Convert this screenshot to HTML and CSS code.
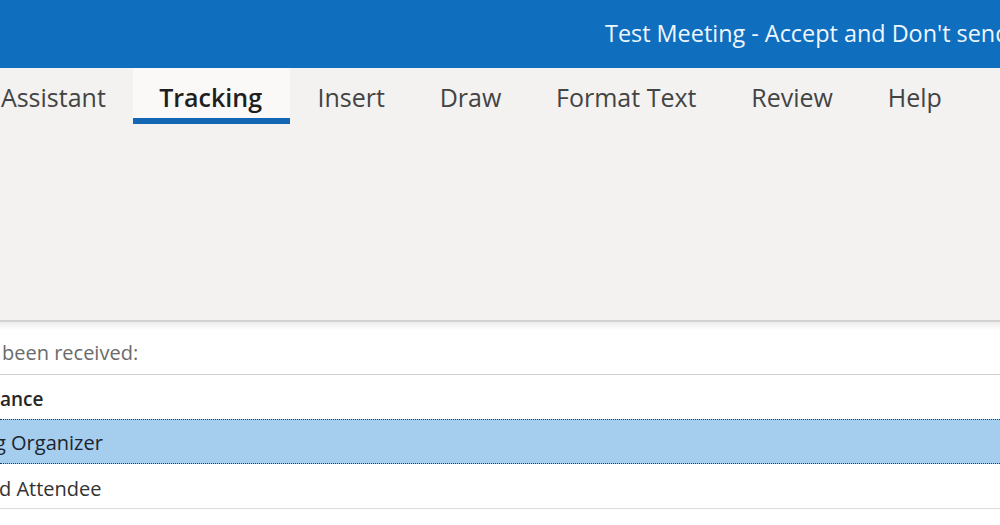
FILE: index.html
```html
<!DOCTYPE html>
<html>
<head>
<meta charset="utf-8">
<link rel="stylesheet" href="styles.css">
</head>
<body>
<div class="window">
  <header class="titlebar">
    <span class="title">Test Meeting - Accept and Don't send</span>
  </header>
  <section class="ribbon">
    <nav class="tabs">
      <span class="tab">Assistant</span>
      <span class="tab active">Tracking</span>
      <span class="tab">Insert</span>
      <span class="tab">Draw</span>
      <span class="tab">Format Text</span>
      <span class="tab">Review</span>
      <span class="tab">Help</span>
    </nav>
  </section>
  <main class="content">
    <div class="info">been received:</div>
    <div class="row header">ance</div>
    <div class="row selected"><span class="cut-g">g Organizer</span></div>
    <div class="row plain"><span class="cut-d">d Attendee</span></div>
  </main>
</div>
</body>
</html>
```
FILE: styles.css
```css
html, body {
  margin: 0;
  padding: 0;
  background: #ffffff;
}
body {
  width: 1000px;
  height: 525px;
  overflow: hidden;
  font-family: "Open Sans", "Noto Sans", sans-serif;
}
.window {
  display: flex;
  flex-direction: column;
  width: 1000px;
}
.titlebar {
  height: 68px;
  background: #106ebe;
  display: flex;
  align-items: center;
  padding-left: 605px;
  white-space: nowrap;
  overflow: hidden;
}
.title {
  color: #eef7ff;
  font-size: 23.4px;
  line-height: 1;
  padding-bottom: 1px;
}
.ribbon {
  height: 252px;
  background: #f3f2f1;
  border-bottom: 2px solid #d4d2d0;
  box-sizing: content-box;
}
.tabs {
  display: flex;
  height: 56px;
  margin-left: -26.5px;
}
.tab {
  display: flex;
  align-items: center;
  padding: 0 27.4px;
  font-size: 25px;
  color: #444444;
  white-space: nowrap;
  box-sizing: border-box;
  border-bottom: 6px solid transparent;
  padding-top: 8px;
}
.tab.active {
  background: #faf9f8;
  color: #201f1e;
  font-weight: 600;
  border-bottom-color: #1366b4;
  padding-left: 26px;
  padding-right: 28px;
}
.content {
  display: flex;
  flex-direction: column;
  background: linear-gradient(#ececec, #ffffff 8px);
}
.info {
  height: 53px;
  box-sizing: border-box;
  border-bottom: 1px solid #cfcfcf;
  font-size: 20px;
  color: #6b6b6b;
  padding-left: 2px;
  padding-top: 18px;
  line-height: 26px;
}
.row {
  height: 45px;
  box-sizing: border-box;
  display: flex;
  align-items: center;
  font-size: 20px;
  white-space: nowrap;
  overflow: hidden;
}
.row.header {
  font-weight: 600;
  font-size: 19px;
  color: #262626;
  height: 44px;
  padding-top: 4px;
}
.row.selected {
  background: #a4cdee;
  color: #1c2430;
  border-top: 1px dotted #2e3a44;
  border-bottom: 1px dotted #2e3a44;
  padding-top: 2px;
}
.row.plain {
  color: #333333;
  border-bottom: 1px solid #dcdcdc;
  padding-top: 5px;
}
.cut-g {
  margin-left: -5px;
}
.cut-d {
  margin-left: -1px;
}
```
